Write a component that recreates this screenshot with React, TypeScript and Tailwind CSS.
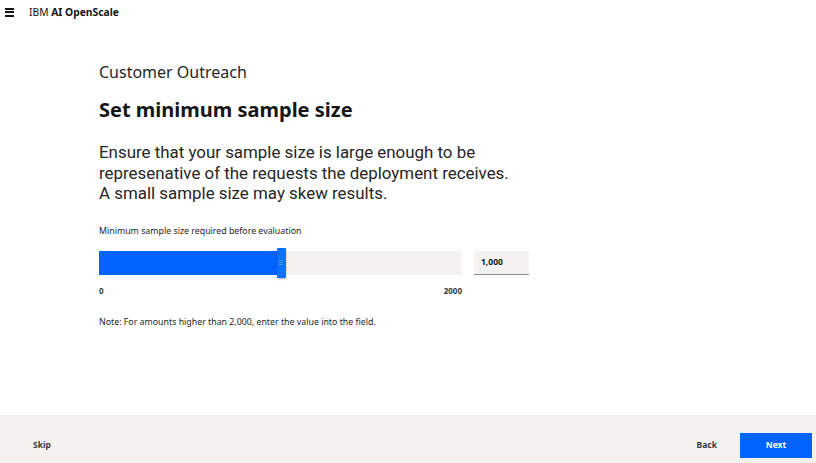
import React from "react";

export default function App() {
  const pct = 50;
  return (
    <div
      className="w-[816px] h-[463px] bg-white flex flex-col text-[#161616] overflow-hidden"
      style={{ fontFamily: '"Noto Sans", "Open Sans", sans-serif' }}
    >
      {/* Header */}
      <div className="h-[24px] flex items-center pl-[5px]">
        <div className="w-[9px] h-[9px] flex flex-col justify-between">
          <div className="h-[2px] bg-[#161616]" />
          <div className="h-[2px] bg-[#161616]" />
          <div className="h-[2px] bg-[#161616]" />
        </div>
        <div className="ml-[15px] text-[10.3px] leading-none">
          IBM <span className="font-bold">AI OpenScale</span>
        </div>
      </div>

      {/* Content */}
      <div className="flex-1 pl-[99px] pt-[38px]">
        <div className="text-[16px] leading-[20px] text-[#262626]">Customer Outreach</div>
        <div className="mt-[15px] text-[20px] leading-[26px] font-bold">Set minimum sample size</div>
        <div
          className="mt-[19px] text-[16.9px] leading-[20.5px] text-[#262626] whitespace-nowrap"
          style={{ fontFamily: 'Roboto, "Noto Sans", sans-serif' }}
        >
          Ensure that your sample size is large enough to be
          <br />
          represenative of the requests the deployment receives.
          <br />
          A small sample size may skew results.
        </div>
        <div className="mt-[21px] text-[8.8px] leading-[12px] text-[#262626]">
          Minimum sample size required before evaluation
        </div>
        <div className="mt-[14px] flex items-start">
          <div className="w-[363px]">
            <div className="relative h-[24px] bg-[#f3f2f1]">
              <div className="h-full bg-[#0062ff]" style={{ width: `${pct}%` }} />
              <div
                className="absolute top-[-3px] w-[9px] h-[30px] bg-[#0f6fff] rounded-[1px] shadow-[0_1px_2px_rgba(0,0,0,0.3)] flex flex-col items-center justify-center gap-[1px]"
                style={{ left: `calc(${pct}% - 4px)` }}
              >
                <div className="w-[4px] h-[1px] bg-[#4d90ff]" />
                <div className="w-[4px] h-[1px] bg-[#4d90ff]" />
                <div className="w-[4px] h-[1px] bg-[#4d90ff]" />
              </div>
            </div>
            <div className="mt-[10px] flex justify-between text-[8px] leading-[12px] font-bold text-[#393939]">
              <span>0</span>
              <span>2000</span>
            </div>
          </div>
          <div className="ml-[12px] w-[55px] h-[24px] bg-[#f3f2f1] border-b border-[#8d8d8d] flex items-center pl-[7px] text-[8.5px] font-bold">
            1,000
          </div>
        </div>
        <div className="mt-[19px] text-[8.8px] leading-[12px] text-[#262626]">
          Note: For amounts higher than 2,000, enter the value into the field.
        </div>
      </div>

      {/* Footer */}
      <div className="h-[48px] bg-[#f3f2f1] flex items-center pl-[33px] pr-[4px] pt-[18px] pb-[5px]">
        <span className="text-[8.5px] font-bold text-[#393939]">Skip</span>
        <div className="flex-1" />
        <span className="text-[8.5px] font-bold text-[#393939] mr-[23px]">Back</span>
        <div className="w-[72px] h-[25px] bg-[#0062ff] text-white text-[8.5px] font-bold flex items-center justify-center">
          Next
        </div>
      </div>
    </div>
  );
}
